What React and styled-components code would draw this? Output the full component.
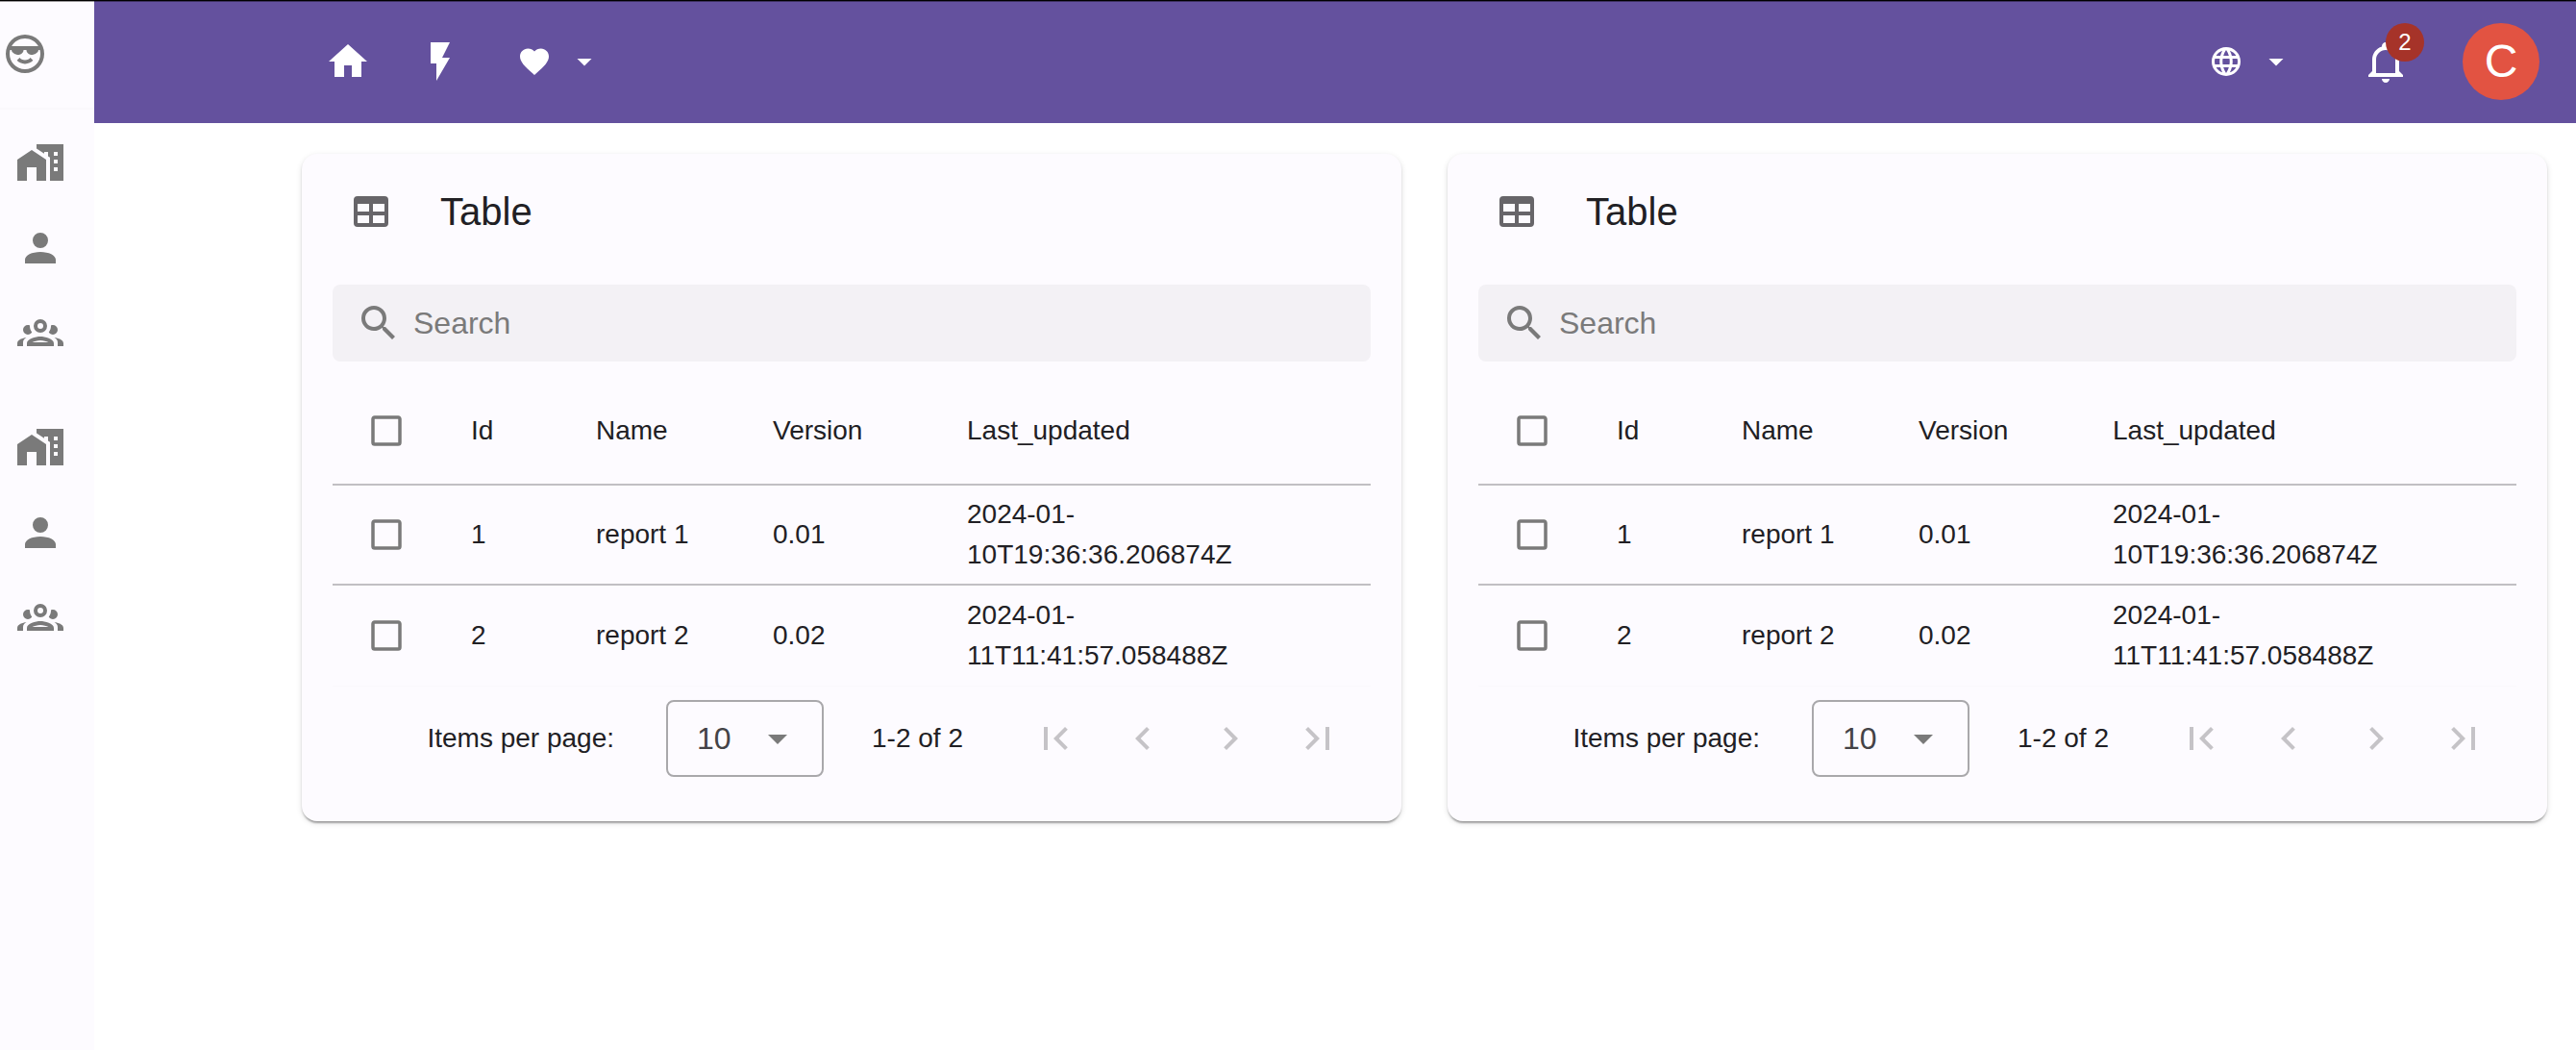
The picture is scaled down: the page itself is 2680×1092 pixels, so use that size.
import React from "react";
import styled, { createGlobalStyle, ThemeProvider } from "styled-components";

const theme = {
  primary: "#64519e",
  surface: "#fdfbff",
  field: "#f3f1f5",
  text: "#212024",
  muted: "#7a7a7a",
  disabled: "#c5c3c7",
  line: "#c1bfc3",
  faint: "#faf8fc",
};

const icons = {
  cool: "M19,10C19,11.38 16.88,12.5 15.5,12.5C14.12,12.5 12.75,11.38 12.75,10H11.25C11.25,11.38 9.88,12.5 8.5,12.5C7.12,12.5 5,11.38 5,10H4.25C4.09,10.64 4,11.31 4,12A8,8 0 0,0 12,20A8,8 0 0,0 20,12C20,11.31 19.91,10.64 19.75,10H19M12,4C9.04,4 6.45,5.61 5.07,8H18.93C17.55,5.61 14.96,4 12,4M22,12A10,10 0 0,1 12,22A10,10 0 0,1 2,12A10,10 0 0,1 12,2A10,10 0 0,1 22,12M12,17.23C10.25,17.23 8.71,16.5 7.81,15.42L9.23,14C9.68,14.72 10.75,15.23 12,15.23C13.25,15.23 14.32,14.72 14.77,14L16.19,15.42C15.29,16.5 13.75,17.23 12,17.23Z",
  city: "M10,2V4.26L14,6.92V6H16V8.25L17,8.92V21H24V2ZM19,6H21V8H19ZM19,10H21V12H19ZM19,14H21V16H19ZM7.5,5L0,10V21H5V14H10V21H15V10Z",
  account: "M12,4A4,4 0 0,1 16,8A4,4 0 0,1 12,12A4,4 0 0,1 8,8A4,4 0 0,1 12,4M12,14C16.42,14 20,15.79 20,18V20H4V18C4,15.79 7.58,14 12,14Z",
  group: "M12,5A3.5,3.5 0 0,0 8.5,8.5A3.5,3.5 0 0,0 12,12A3.5,3.5 0 0,0 15.5,8.5A3.5,3.5 0 0,0 12,5M12,7A1.5,1.5 0 0,1 13.5,8.5A1.5,1.5 0 0,1 12,10A1.5,1.5 0 0,1 10.5,8.5A1.5,1.5 0 0,1 12,7M5.5,8A2.5,2.5 0 0,0 3,10.5C3,11.44 3.53,12.25 4.29,12.68C4.65,12.88 5.06,13 5.5,13C5.94,13 6.35,12.88 6.71,12.68C7.08,12.47 7.39,12.17 7.62,11.81C6.89,10.86 6.5,9.7 6.5,8.5C6.5,8.41 6.5,8.31 6.5,8.22C6.2,8.08 5.86,8 5.5,8M18.5,8C18.14,8 17.8,8.08 17.5,8.22C17.5,8.31 17.5,8.41 17.5,8.5C17.5,9.7 17.11,10.86 16.38,11.81C16.5,12 16.63,12.15 16.78,12.3C16.94,12.45 17.1,12.58 17.29,12.68C17.65,12.88 18.06,13 18.5,13C18.94,13 19.35,12.88 19.71,12.68C20.47,12.25 21,11.44 21,10.5A2.5,2.5 0 0,0 18.5,8M12,14C9.66,14 5,15.17 5,17.5V19H19V17.5C19,15.17 14.34,14 12,14M4.71,14.55C2.78,14.78 0,15.76 0,17.5V19H3V17.07C3,16.06 3.69,15.22 4.71,14.55M19.29,14.55C20.31,15.22 21,16.06 21,17.07V19H24V17.5C24,15.76 21.22,14.78 19.29,14.55M12,16C13.53,16 15.24,16.5 16.23,17H7.77C8.76,16.5 10.47,16 12,16Z",
  home: "M10,20V14H14V20H19V12H22L12,3L2,12H5V20H10Z",
  flash: "M7,2V13H10V22L17,10H13L17,2H7Z",
  heart: "M12,21.35L10.55,20.03C5.4,15.36 2,12.27 2,8.5C2,5.41 4.42,3 7.5,3C9.24,3 10.91,3.81 12,5.08C13.09,3.81 14.76,3 16.5,3C19.58,3 22,5.41 22,8.5C22,12.27 18.6,15.36 13.45,20.03L12,21.35Z",
  caret: "M7,10L12,15L17,10H7Z",
  web: "M16.36,14C16.44,13.34 16.5,12.68 16.5,12C16.5,11.32 16.44,10.66 16.36,10H19.74C19.9,10.64 20,11.31 20,12C20,12.69 19.9,13.36 19.74,14M14.59,19.56C15.19,18.45 15.65,17.25 15.97,16H18.92C17.96,17.65 16.43,18.93 14.59,19.56M14.34,14H9.66C9.56,13.34 9.5,12.68 9.5,12C9.5,11.32 9.56,10.65 9.66,10H14.34C14.43,10.65 14.5,11.32 14.5,12C14.5,12.68 14.43,13.34 14.34,14M12,19.96C11.17,18.76 10.5,17.43 10.09,16H13.91C13.5,17.43 12.83,18.76 12,19.96M8,8H5.08C6.03,6.34 7.57,5.06 9.4,4.44C8.8,5.55 8.35,6.75 8,8M5.08,16H8C8.35,17.25 8.8,18.45 9.4,19.56C7.57,18.93 6.03,17.65 5.08,16M4.26,14C4.1,13.36 4,12.69 4,12C4,11.31 4.1,10.64 4.26,10H7.64C7.56,10.66 7.5,11.32 7.5,12C7.5,12.68 7.56,13.34 7.64,14M12,4.03C12.83,5.23 13.5,6.57 13.91,8H10.09C10.5,6.57 11.17,5.23 12,4.03M18.92,8H15.97C15.65,6.75 15.19,5.55 14.59,4.44C16.43,5.07 17.96,6.34 18.92,8M12,2C6.47,2 2,6.5 2,12A10,10 0 0,0 12,22A10,10 0 0,0 22,12A10,10 0 0,0 12,2Z",
  bell: "M10 21H14C14 22.1 13.1 23 12 23S10 22.1 10 21M21 19V20H3V19L5 17V11C5 7.9 7.03 5.17 10 4.29C10 4.19 10 4.1 10 4C10 2.9 10.9 2 12 2S14 2.9 14 4C14 4.1 14 4.19 14 4.29C16.97 5.17 19 7.9 19 11V17L21 19M17 11C17 8.24 14.76 6 12 6S7 8.24 7 11V18H17V11Z",
  table: "M5,4H19A2,2 0 0,1 21,6V18A2,2 0 0,1 19,20H5A2,2 0 0,1 3,18V6A2,2 0 0,1 5,4M5,8V12H11V8H5M13,8V12H19V8H13M5,14V18H11V14H5M13,14V18H19V14H13Z",
  magnify: "M9.5,3A6.5,6.5 0 0,1 16,9.5C16,11.11 15.41,12.59 14.44,13.73L14.71,14H15.5L20.5,19L19,20.5L14,15.5V14.71L13.73,14.44C12.59,15.41 11.11,16 9.5,16A6.5,6.5 0 0,1 3,9.5A6.5,6.5 0 0,1 9.5,3M9.5,5C7,5 5,7 5,9.5C5,12 7,14 9.5,14C12,14 14,12 14,9.5C14,7 12,5 9.5,5Z",
  boxBlank: "M19,3H5C3.89,3 3,3.89 3,5V19A2,2 0 0,0 5,21H19A2,2 0 0,0 21,19V5C21,3.89 20.1,3 19,3M19,5V19H5V5H19Z",
  first: "M18.41,16.59L13.82,12L18.41,7.41L17,6L11,12L17,18L18.41,16.59M6,6H8V18H6V6Z",
  prev: "M15.41,16.58L10.83,12L15.41,7.41L14,6L8,12L14,18L15.41,16.58Z",
  next: "M8.59,16.58L13.17,12L8.59,7.41L10,6L16,12L10,18L8.59,16.58Z",
  last: "M5.59,7.41L10.18,12L5.59,16.59L7,18L13,12L7,6L5.59,7.41M16,6H18V18H16V6Z",
};

const GlobalStyle = createGlobalStyle`
  *, *::before, *::after { box-sizing: border-box; }
  body {
    margin: 0;
    background: #fff;
    color: ${theme.text};
    font: 28px/42px "Liberation Sans", Arial, Helvetica, sans-serif;
  }
  button, input, select { font: inherit; color: inherit; margin: 0; }
`;

const Svg = styled.svg`
  display: block;
  flex: none;
  width: ${(p) => p.$size}px;
  height: ${(p) => p.$size}px;
  fill: currentColor;
`;

const Icon = ({ name, size = 48 }) => (
  <Svg $size={size} viewBox="0 0 24 24" aria-hidden="true">
    <path d={icons[name]} fillRule="evenodd" />
  </Svg>
);

const Shell = styled.div`
  display: flex;
  min-height: 100vh;

  &::before {
    content: "";
    position: absolute;
    top: 0;
    left: 0;
    right: 0;
    height: 2px;
    background: rgba(0, 0, 0, 0.4);
    border-top: 1px solid #000;
  }
`;

const Sidebar = styled.nav`
  flex: none;
  width: 98px;
  background: ${(p) => p.theme.surface};
  color: ${(p) => p.theme.muted};
`;

const Brand = styled.a`
  display: flex;
  align-items: center;
  height: 112px;
  padding-left: 2px;
  color: inherit;
`;

const NavGroups = styled.div`
  display: flex;
  flex-direction: column;
  gap: 32px;
  padding: 12px 0;
  border-top: 2px solid ${(p) => p.theme.faint};
`;

const NavList = styled.ul`
  margin: 0;
  padding: 0;
  list-style: none;
`;

const NavLink = styled.a`
  display: flex;
  align-items: center;
  height: 88px;
  padding-left: 18px;
  color: inherit;
`;

const Page = styled.div`
  flex: 1;
  min-width: 0;
`;

const AppBar = styled.header`
  display: flex;
  align-items: center;
  height: 128px;
  padding: 0 38px 0 216px;
  background: ${(p) => p.theme.primary};
  color: #fff;
`;

const Spacer = styled.div`
  flex: 1;
`;

const PlainButton = styled.button`
  display: flex;
  align-items: center;
  justify-content: center;
  padding: 0;
  border: 0;
  background: none;
  color: inherit;
`;

const IconButton = styled(PlainButton)`
  width: 96px;
  height: 96px;
`;

const MenuButton = styled(PlainButton)`
  gap: 16px;
  height: 72px;
  padding: 0 32px;
`;

const AlertButton = styled(IconButton)`
  margin: 0 32px 0 16px;
`;

const BadgeAnchor = styled.span`
  position: relative;
`;

const Badge = styled.span`
  position: absolute;
  top: -16px;
  left: 24px;
  width: 40px;
  border-radius: 20px;
  background: #a63329;
  font-size: 24px;
  line-height: 40px;
  text-align: center;
`;

const Avatar = styled(PlainButton)`
  width: 80px;
  height: 80px;
  border-radius: 50%;
  background: #e25342;
  font-size: 48px;
`;

const Content = styled.main`
  display: grid;
  grid-template-columns: repeat(2, minmax(0, 1fr));
  gap: 48px;
  padding: 32px 30px 32px 216px;
`;

const Card = styled.section`
  padding: 0 32px 32px;
  border-radius: 16px;
  background: ${(p) => p.theme.surface};
  box-shadow:
    0 4px 2px -2px rgba(0, 0, 0, 0.2),
    0 2px 2px rgba(0, 0, 0, 0.14),
    0 2px 6px rgba(0, 0, 0, 0.12);
`;

const CardHeader = styled.div`
  display: flex;
  align-items: center;
  gap: 48px;
  height: 120px;
  padding: 0 16px;
  color: #676569;
`;

const CardTitle = styled.h2`
  margin: 0;
  color: ${(p) => p.theme.text};
  font-size: 40px;
  font-weight: 400;
  line-height: 64px;
`;

const SearchField = styled.label`
  display: flex;
  align-items: center;
  gap: 12px;
  height: 80px;
  margin: 16px 0;
  padding: 0 24px;
  border-radius: 8px;
  background: ${(p) => p.theme.field};
  color: ${(p) => p.theme.muted};
`;

const SearchInput = styled.input`
  flex: 1;
  min-width: 0;
  padding: 0;
  border: 0;
  outline: 0;
  background: none;
  font-size: 32px;

  &::placeholder {
    color: inherit;
    opacity: 1;
  }
`;

const Table = styled.table`
  width: 100%;
  table-layout: fixed;
  border-collapse: separate;
  border-spacing: 0;
  text-align: left;
`;

const HeadCell = styled.th`
  width: ${(p) => (p.$width ? `${p.$width}px` : "auto")};
  height: 113px;
  padding: 0 32px;
  border-bottom: 2px solid ${(p) => p.theme.line};
  font-weight: 400;
`;

const Cell = styled.td`
  height: 104px;
  padding: 0 32px;
  white-space: nowrap;

  tr:not(:last-child) > & {
    border-bottom: 2px solid ${(p) => p.theme.line};
  }
`;

const CheckLabel = styled.label`
  display: grid;
  place-items: center;
  width: 48px;
  height: 48px;
  color: ${(p) => p.theme.muted};

  > * {
    grid-area: 1 / 1;
  }

  > svg {
    pointer-events: none;
  }
`;

const CheckInput = styled.input`
  appearance: none;
  width: 30px;
  height: 30px;
  border-radius: 4px;

  &:checked {
    background: ${(p) => p.theme.primary};
  }
`;

const Checkbox = ({ label }) => (
  <CheckLabel>
    <CheckInput type="checkbox" aria-label={label} />
    <Icon name="boxBlank" size={42} />
  </CheckLabel>
);

const Footer = styled.div`
  display: flex;
  align-items: center;
  justify-content: flex-end;
  gap: 50px;
  padding: 14px 10px 14px 0;
  border-top: 1px solid ${(p) => p.theme.faint};
`;

const PageSize = styled.label`
  display: flex;
  align-items: center;
  gap: 54px;
`;

const SelectBox = styled.span`
  display: grid;
  align-items: center;
  width: 164px;
  color: ${(p) => p.theme.muted};

  > * {
    grid-area: 1 / 1;
  }

  > svg {
    justify-self: end;
    margin-right: 24px;
    pointer-events: none;
  }
`;

const Select = styled.select`
  appearance: none;
  width: 100%;
  height: 80px;
  padding: 0 30px;
  border: 2px solid #a9a8ab;
  border-radius: 8px;
  background: none;
  color: #444347;
  font-size: 32px;
`;

const Pager = styled.div`
  display: flex;
  color: ${(p) => p.theme.disabled};
`;

const PagerButton = styled(PlainButton)`
  width: 91px;
  height: 80px;
`;

const columns = [
  { label: "Id", width: 130 },
  { label: "Name", width: 184 },
  { label: "Version", width: 202 },
  { label: "Last_updated" },
];

const reports = [
  { id: 1, name: "report 1", version: "0.01", updated: ["2024-01-", "10T19:36:36.206874Z"] },
  { id: 2, name: "report 2", version: "0.02", updated: ["2024-01-", "11T11:41:57.058488Z"] },
];

const navItems = [
  ["city", "Home"],
  ["account", "Account"],
  ["group", "Groups"],
];

const pagerItems = [
  ["first", "First page"],
  ["prev", "Previous page"],
  ["next", "Next page"],
  ["last", "Last page"],
];

const NavGroup = () => (
  <NavList>
    {navItems.map(([icon, label]) => (
      <li key={icon}>
        <NavLink href="#" aria-label={label}>
          <Icon name={icon} />
        </NavLink>
      </li>
    ))}
  </NavList>
);

const ReportCard = () => (
  <Card>
    <CardHeader>
      <Icon name="table" />
      <CardTitle>Table</CardTitle>
    </CardHeader>
    <SearchField>
      <Icon name="magnify" />
      <SearchInput type="text" placeholder="Search" aria-label="Search" />
    </SearchField>
    <Table>
      <thead>
        <tr>
          <HeadCell $width={112}>
            <Checkbox label="Select all" />
          </HeadCell>
          {columns.map((c) => (
            <HeadCell key={c.label} $width={c.width} scope="col">
              {c.label}
            </HeadCell>
          ))}
        </tr>
      </thead>
      <tbody>
        {reports.map((r) => (
          <tr key={r.id}>
            <Cell>
              <Checkbox label={`Select ${r.name}`} />
            </Cell>
            <Cell>{r.id}</Cell>
            <Cell>{r.name}</Cell>
            <Cell>{r.version}</Cell>
            <Cell>
              {r.updated[0]}
              <br />
              {r.updated[1]}
            </Cell>
          </tr>
        ))}
      </tbody>
    </Table>
    <Footer>
      <PageSize>
        Items per page:
        <SelectBox>
          <Select defaultValue="10">
            <option>10</option>
            <option>25</option>
            <option>50</option>
          </Select>
          <Icon name="caret" />
        </SelectBox>
      </PageSize>
      <span>1-2 of 2</span>
      <Pager>
        {pagerItems.map(([icon, label]) => (
          <PagerButton key={icon} type="button" disabled aria-label={label}>
            <Icon name={icon} />
          </PagerButton>
        ))}
      </Pager>
    </Footer>
  </Card>
);

export default function App() {
  return (
    <ThemeProvider theme={theme}>
      <GlobalStyle />
      <Shell>
        <Sidebar>
          <Brand href="#" aria-label="Start">
            <Icon name="cool" />
          </Brand>
          <NavGroups>
            <NavGroup />
            <NavGroup />
          </NavGroups>
        </Sidebar>
        <Page>
          <AppBar>
            <IconButton type="button" aria-label="Home">
              <Icon name="home" />
            </IconButton>
            <IconButton type="button" aria-label="Activity">
              <Icon name="flash" />
            </IconButton>
            <MenuButton type="button" aria-label="Favorites">
              <Icon name="heart" size={36} />
              <Icon name="caret" size={36} />
            </MenuButton>
            <Spacer />
            <MenuButton type="button" aria-label="Language">
              <Icon name="web" size={36} />
              <Icon name="caret" size={36} />
            </MenuButton>
            <AlertButton type="button" aria-label="Notifications">
              <BadgeAnchor>
                <Icon name="bell" />
                <Badge>2</Badge>
              </BadgeAnchor>
            </AlertButton>
            <Avatar type="button">C</Avatar>
          </AppBar>
          <Content>
            <ReportCard />
            <ReportCard />
          </Content>
        </Page>
      </Shell>
    </ThemeProvider>
  );
}
